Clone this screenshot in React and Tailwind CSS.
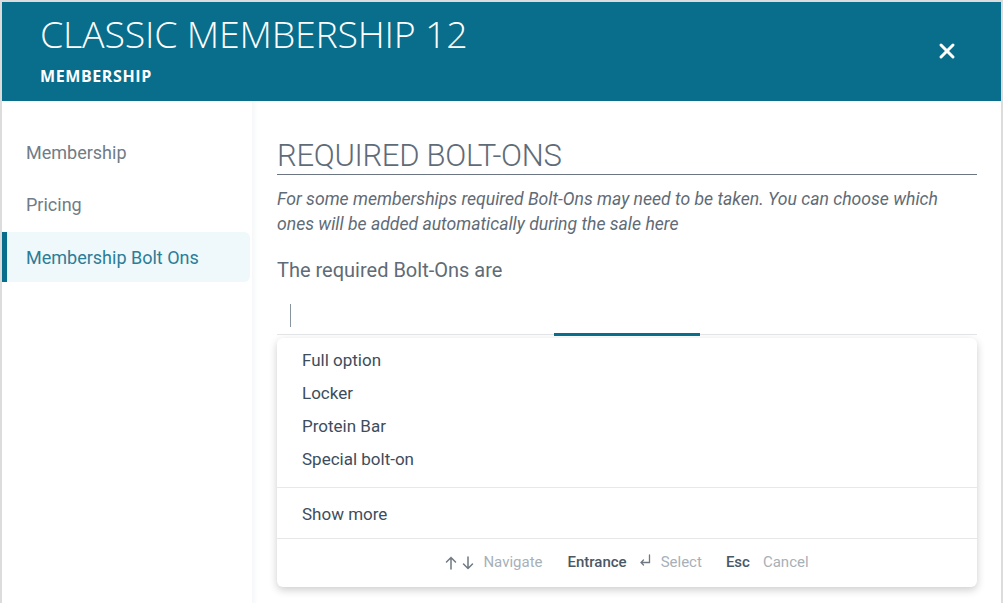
import { X } from 'lucide-react'

const navItems = ['Membership', 'Pricing', 'Membership Bolt Ons']
const boltOns = ['Full option', 'Locker', 'Protein Bar', 'Special bolt-on']

function SideNav({ active }) {
  return (
    <nav className="w-[250px] shrink-0 pt-[25px] pr-[2px]">
      {navItems.map((item) =>
        item === active ? (
          <div
            key={item}
            className="h-[50px] mt-[2px] flex items-center pl-[19px] text-[18px] rounded-r-md bg-[#eff8fa] text-[#2b7d98] border-l-[5px] border-[#086e8b]"
          >
            {item}
          </div>
        ) : (
          <div key={item} className="h-[52px] flex items-center pl-[24px] text-[18px] text-[#707c87]">
            {item}
          </div>
        )
      )}
    </nav>
  )
}

function ArrowUp() {
  return (
    <svg width="12" height="14" viewBox="0 0 12 14" fill="none" stroke="#6f7983" strokeWidth="1.5" strokeLinecap="round">
      <path d="M6 13V1.5M1.5 6L6 1.5L10.5 6" />
    </svg>
  )
}

function ArrowDown() {
  return (
    <svg width="12" height="14" viewBox="0 0 12 14" fill="none" stroke="#6f7983" strokeWidth="1.5" strokeLinecap="round">
      <path d="M6 1v11.5M1.5 8L6 12.5L10.5 8" />
    </svg>
  )
}

function ReturnKey() {
  return (
    <svg width="12" height="13" viewBox="0 0 12 13" fill="none" stroke="#6f7983" strokeWidth="1.3" strokeLinecap="round">
      <path d="M10.5 1v7.5H2M4.5 6L2 8.5L4.5 11" />
    </svg>
  )
}

function ShortcutBar() {
  return (
    <div className="h-[48px] pb-[1px] flex items-center justify-center text-[15px]">
      <span className="flex items-center gap-[5px]">
        <ArrowUp />
        <ArrowDown />
        <span className="text-[#a8b0b7] ml-[4px]">Navigate</span>
      </span>
      <span className="flex items-center ml-[25px]">
        <span className="font-medium text-[#4a5866]">Entrance</span>
        <span className="ml-[12px] mt-[-4px]"><ReturnKey /></span>
        <span className="text-[#a8b0b7] ml-[10px]">Select</span>
      </span>
      <span className="flex items-center ml-[24px]">
        <span className="font-medium text-[#4a5866]">Esc</span>
        <span className="text-[#a8b0b7] ml-[13px]">Cancel</span>
      </span>
    </div>
  )
}

export default function App() {
  return (
    <div className="w-[1003px] h-[603px] bg-[#dcdcdc] pt-[2px] pl-[2px] overflow-hidden font-['Roboto',sans-serif]">
      <div className="w-[999px] h-[601px] bg-white flex flex-col">
        <header className="h-[99px] bg-[#086e8b] text-white flex items-center justify-between pl-[38px] pr-[42px] shrink-0 font-['Open_Sans',sans-serif]">
          <div>
            <h1 className="text-[37.5px] font-light leading-none tracking-[-0.2px] mt-[-4px]">CLASSIC MEMBERSHIP 12</h1>
            <p className="text-[16px] font-bold mt-[15px] leading-none tracking-[0.6px]">MEMBERSHIP</p>
          </div>
          <X size={24} strokeWidth={3} className="mt-[-2px]" />
        </header>

        <div className="flex flex-1 min-h-0">
          <SideNav active="Membership Bolt Ons" />

          <main className="flex-1 pl-[25px] pr-[24px] pt-[39px] bg-gradient-to-r from-[#f6f7f8] via-white to-white bg-[length:12px_100%] bg-no-repeat">
            <h2 className="text-[31px] font-light text-[#5f6c78] leading-none pb-[3px] border-b border-[#6b7682] tracking-[-0.3px]">
              REQUIRED BOLT-ONS
            </h2>
            <p className="mt-[12px] text-[17.6px] italic text-[#5f6b76] leading-[25px]">
              For some memberships required Bolt-Ons may need to be taken. You can choose which ones will be added automatically during the sale here
            </p>
            <p className="mt-[23px] text-[20px] text-[#5f6b76] leading-none">The required Bolt-Ons are</p>

            <div className="relative mt-[14px] h-[41px] border-b border-[#e2e4e6]">
              <span className="absolute left-[13px] top-[10px] w-px h-[23px] bg-[#8895a0]" />
              <span className="absolute left-[277px] bottom-[-2px] w-[146px] h-[3px] bg-[#086e8b]" />
            </div>

            <div className="mt-[3px] bg-white rounded-md shadow-[0_3px_8px_rgba(0,0,0,0.2)] text-[17px] text-[#3d4d5c]">
              <ul className="pt-[6px] pb-[11px]">
                {boltOns.map((b) => (
                  <li key={b} className="h-[33px] flex items-center pl-[25px]">{b}</li>
                ))}
              </ul>
              <div className="border-t border-[#e6e8ea] h-[51px] pt-[4px] flex items-center pl-[25px]">Show more</div>
              <div className="border-t border-[#e6e8ea]">
                <ShortcutBar />
              </div>
            </div>
          </main>
        </div>
      </div>
    </div>
  )
}
